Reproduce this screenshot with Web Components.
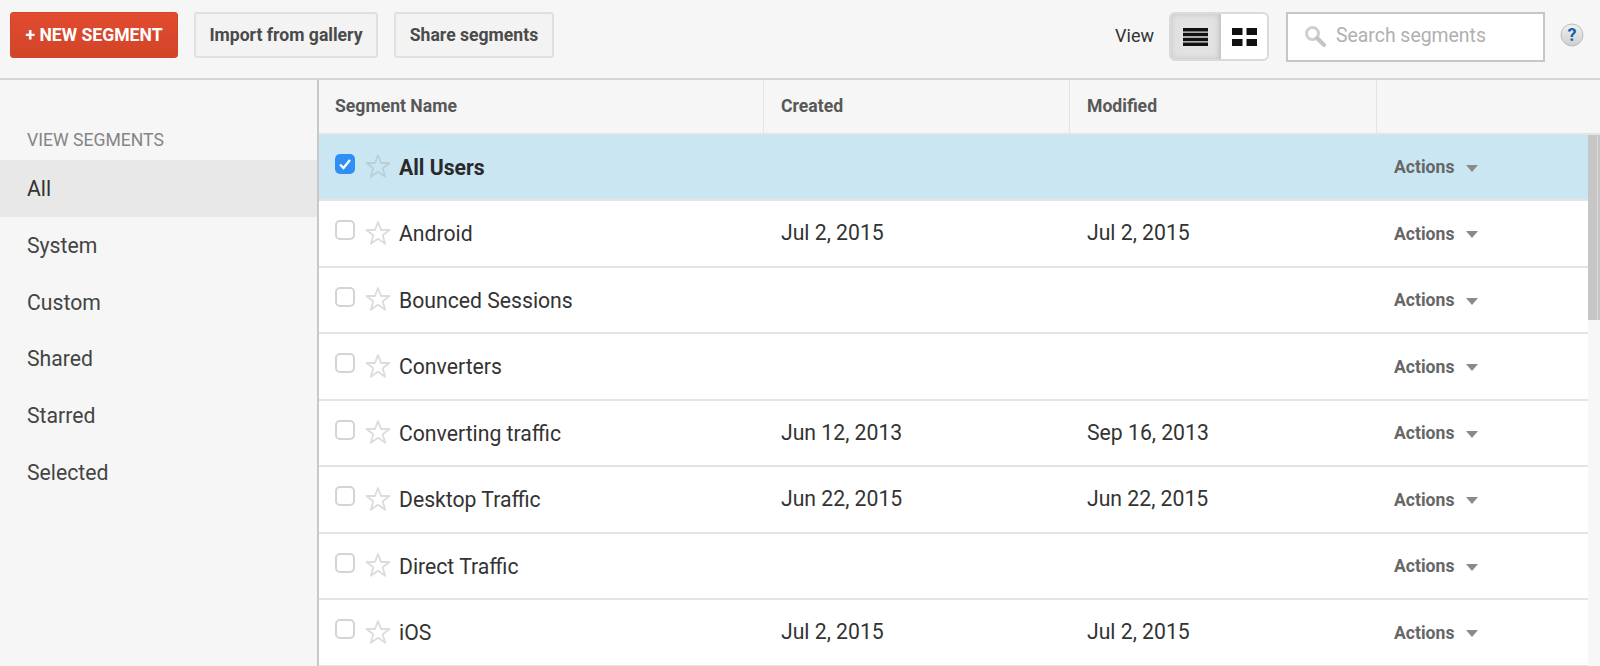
<!DOCTYPE html>
<html>
<head>
<meta charset="utf-8">
<title>Segments</title>
<style>
  html, body { margin: 0; height: 666px; overflow: hidden; background: #f6f6f6; font-family: Roboto, "Liberation Sans", sans-serif; }
  body { display: flex; flex-direction: column; }
</style>
</head>
<body>
<seg-toolbar>
  <seg-button slot="left" kind="primary">+ NEW SEGMENT</seg-button>
  <seg-button slot="left" w="184">Import from gallery</seg-button>
  <seg-button slot="left" w="160">Share segments</seg-button>
</seg-toolbar>
<seg-main>
  <seg-sidebar slot="side">
    <seg-nav selected>All</seg-nav>
    <seg-nav>System</seg-nav>
    <seg-nav>Custom</seg-nav>
    <seg-nav>Shared</seg-nav>
    <seg-nav>Starred</seg-nav>
    <seg-nav>Selected</seg-nav>
  </seg-sidebar>
  <seg-table slot="table">
    <seg-row checked name="All Users"></seg-row>
    <seg-row name="Android" created="Jul 2, 2015" modified="Jul 2, 2015"></seg-row>
    <seg-row name="Bounced Sessions"></seg-row>
    <seg-row name="Converters"></seg-row>
    <seg-row name="Converting traffic" created="Jun 12, 2013" modified="Sep 16, 2013"></seg-row>
    <seg-row name="Desktop Traffic" created="Jun 22, 2015" modified="Jun 22, 2015"></seg-row>
    <seg-row name="Direct Traffic"></seg-row>
    <seg-row name="iOS" created="Jul 2, 2015" modified="Jul 2, 2015"></seg-row>
  </seg-table>
</seg-main>

<script>
// small helper, every element just gets its html in an open shadow root
class Base extends HTMLElement {
  render(html) {
    if (!this.shadowRoot) this.attachShadow({ mode: 'open' });
    this.shadowRoot.innerHTML = html;
  }
}

class SegButton extends Base {
  connectedCallback() {
    var w = this.getAttribute('w') || 168;
    this.render(`
    <style>
      :host { width: ${w}px; height: 46px; box-sizing: border-box; border-radius: 3px;
        display: flex; align-items: center; justify-content: center; font-size: 17.6px; font-weight: 700; white-space: nowrap; }
      :host { background: #f3f3f3; border: 2px solid #e0e0e0; color: #4a4a4a; }
      :host([kind="primary"]) { background: linear-gradient(#e24b30, #d14428); border: 1px solid #d0452b; color: #fff; }
    </style>
    <slot></slot>`);
  }
}

class SegToolbar extends Base {
  connectedCallback() {
    this.render(`
    <style>
      :host { display: flex; flex: none; height: 80px; box-sizing: border-box; border-bottom: 2px solid #d4d4d4;
        padding: 12px 16px 0 10px; background: #f6f6f6; }
      .left { display: flex; gap: 16px; align-items: flex-start; }
      .right { margin-left: auto; display: flex; align-items: flex-start; }
      .view { font-size: 18px; color: #333; margin-top: 13px; margin-right: 15px; }
      .help { margin: 11px 0 0 15px; }
    </style>
    <div class="left"><slot name="left"></slot></div>
    <div class="right">
      <span class="view">View</span>
      <seg-view-toggle></seg-view-toggle>
      <seg-search></seg-search>
      <svg class="help" width="24" height="24" viewBox="0 0 24 24">
        <defs><linearGradient id="h" x1="0" y1="0" x2="0" y2="1"><stop offset="0" stop-color="#f0f0f0"/><stop offset="1" stop-color="#cfcfcf"/></linearGradient></defs>
        <circle cx="12" cy="12" r="11" fill="url(#h)" stroke="#bdbdbd"/>
        <text x="12" y="18" text-anchor="middle" font-family="Roboto, sans-serif" font-weight="700" font-size="18" fill="#1560ad">?</text>
      </svg>
    </div>`);
  }
}

class SegViewToggle extends Base {
  connectedCallback() {
    this.render(`
    <style>
      :host { display: flex; width: 100px; height: 49px; box-sizing: border-box; border: 2px solid #dadada; border-radius: 6px;
        overflow: hidden; background: #fff; }
      .on { width: 48px; background: #e2e2e2; box-shadow: inset 0 0 6px #c4c4c4; border-right: 2px solid #c9c9c9; display: flex; align-items: center; justify-content: center; }
      .off { flex: 1; display: flex; align-items: center; justify-content: center; }
    </style>
    <div class="on">
      <svg width="25" height="18" viewBox="0 0 25 18"><path d="M0 0h25v3.500H0zM0 4.800h25v3.500H0zM0 9.700h25v3.500H0zM0 14.500h25v3.500H0z" fill="#111"/></svg>
    </div>
    <div class="off">
      <svg width="25" height="18" viewBox="0 0 25 18"><path d="M0 0h10.500v7H0zM14.500 0h10.500v7H14.500zM0 11h10.500v7H0zM14.500 11h10.500v7H14.500z" fill="#111"/></svg>
    </div>`);
  }
}

class SegSearch extends Base {
  connectedCallback() {
    this.render(`
    <style>
      :host { display: flex; align-items: center; width: 259px; height: 50px; box-sizing: border-box; margin-left: 17px;
        background: #fff; border: 2px solid #c6c6c6; padding: 0 0 3px 16px; color: #b0b0b0; font-size: 19.4px; }
      svg { margin-right: 10px; }
    </style>
    <svg width="22" height="22" viewBox="0 0 22 22" fill="none">
      <circle cx="8.500" cy="8.500" r="6" stroke="#cfcfcf" stroke-width="3"/>
      <path d="M13 13l7 7" stroke="#c4c4c4" stroke-width="4" stroke-linecap="round"/>
    </svg>
    <span>Search segments</span>`);
  }
}

class SegMain extends Base {
  connectedCallback() {
    this.render(`
    <style>
      :host { display: flex; flex: 1; min-height: 0; }
      .side { width: 319px; flex: none; box-sizing: border-box; border-right: 2px solid #c8c8c8; }
      .table { flex: 1; min-width: 0; }
    </style>
    <div class="side"><slot name="side"></slot></div>
    <div class="table"><slot name="table"></slot></div>`);
  }
}

class SegSidebar extends Base {
  connectedCallback() {
    this.render(`
    <style>
      :host { display: block; padding-top: 50px; }
      h4 { margin: 0 0 9px 27px; font-size: 17.6px; font-weight: 400; color: #858585; line-height: 21px; }
    </style>
    <h4>VIEW SEGMENTS</h4>
    <slot></slot>`);
  }
}

class SegNav extends Base {
  connectedCallback() {
    this.render(`
    <style>
      :host { display: flex; align-items: center; height: 56.700px; box-sizing: border-box; padding: 1px 0 0 27px; font-size: 21.2px; color: #444; }
      :host([selected]) { background: #e8e8e8; color: #333; }
    </style>
    <slot></slot>`);
  }
}

class SegTable extends Base {
  connectedCallback() {
    this.render(`
    <style>
      :host { display: block; position: relative; height: 100%; overflow: hidden; }
      .head { display: grid; grid-template-columns: 445px 306px 307px 1fr; height: 54.500px; box-sizing: border-box;
        border-bottom: 2px solid #e4e4e4; font-size: 17.6px; font-weight: 700; color: #585858; }
      .head div { display: flex; align-items: center; padding: 0 0 1px 17px; border-right: 1px solid #e4e4e4; }
      .head div:first-child { padding-left: 16px; }
      .head div:last-child { border-right: 0; }
      .rows { padding-right: 12px; background: #f7f7f7; }
      .thumb { position: absolute; right: 0; top: 55px; width: 12px; height: 185px; background: #c6c6c6; }
      .thumb:after { content: ""; position: absolute; right: 2px; top: 0; bottom: 0; width: 1px; background: #dadada; }
    </style>
    <div class="head"><div>Segment Name</div><div>Created</div><div>Modified</div><div></div></div>
    <div class="rows"><slot></slot></div>
    <div class="thumb"></div>`);
  }
}

class SegRow extends Base {
  connectedCallback() {
    var name = this.getAttribute('name');
    var created = this.getAttribute('created') || '';
    var modified = this.getAttribute('modified') || '';
    var checked = this.hasAttribute('checked');
    this.render(`
    <style>
      :host { display: grid; grid-template-columns: 445px 306px 307px 1fr; height: 66.500px; box-sizing: border-box;
        background: #fff; border-bottom: 2px solid #e4e4e4; font-size: 21.2px; color: #333; align-items: center; }
      :host([checked]) { background: #cbe6f3; }
      .name { display: flex; align-items: center; padding-left: 16px; }
      .box { width: 20px; height: 20px; box-sizing: border-box; border-radius: 5px; border: 2px solid #d4d4d4; background: #fff; margin-bottom: 6px; display: block; }
      .box.on { background: #2f8ff5; border: 0; }
      .star { margin: 0 8px 1px 10px; }
      .title { padding-top: 1px; }
      :host([checked]) .title { font-weight: 700; color: #2a2a2a; }
      .date { padding-left: 17px; padding-bottom: 1px; }
      .act { padding: 1px 0 0 17px; display: flex; align-items: center; font-size: 17.6px; font-weight: 700; color: #666; }
      .caret { width: 0; height: 0; margin-left: 12px; margin-top: 2px; border-left: 6.500px solid transparent; border-right: 6.500px solid transparent; border-top: 7px solid #8a8a8a; }
    </style>
    <div class="name">
      <span class="box${checked ? ' on' : ''}">${checked ? '<svg width="20" height="20" viewBox="0 0 20 20"><path d="M5 10.500l3.500 3.500L15 6" fill="none" stroke="#fff" stroke-width="2.400"/></svg>' : ''}</span>
      <svg class="star" width="26" height="26" viewBox="0 0 26 26"><path d="M13 2l3 8h8.500l-6.800 5.200 2.500 8.600L13 18.800l-7.200 5 2.500-8.600L1.500 10H10z" fill="none" stroke="${checked ? '#b9cfdb' : '#dcdcdc'}" stroke-width="1.800" stroke-linejoin="round"/></svg>
      <span class="title">${name}</span>
    </div>
    <div class="date">${created}</div>
    <div class="date">${modified}</div>
    <div class="act">Actions<span class="caret"></span></div>`);
  }
}

customElements.define('seg-button', SegButton);
customElements.define('seg-toolbar', SegToolbar);
customElements.define('seg-view-toggle', SegViewToggle);
customElements.define('seg-search', SegSearch);
customElements.define('seg-main', SegMain);
customElements.define('seg-sidebar', SegSidebar);
customElements.define('seg-nav', SegNav);
customElements.define('seg-table', SegTable);
customElements.define('seg-row', SegRow);
</script>
</body>
</html>
